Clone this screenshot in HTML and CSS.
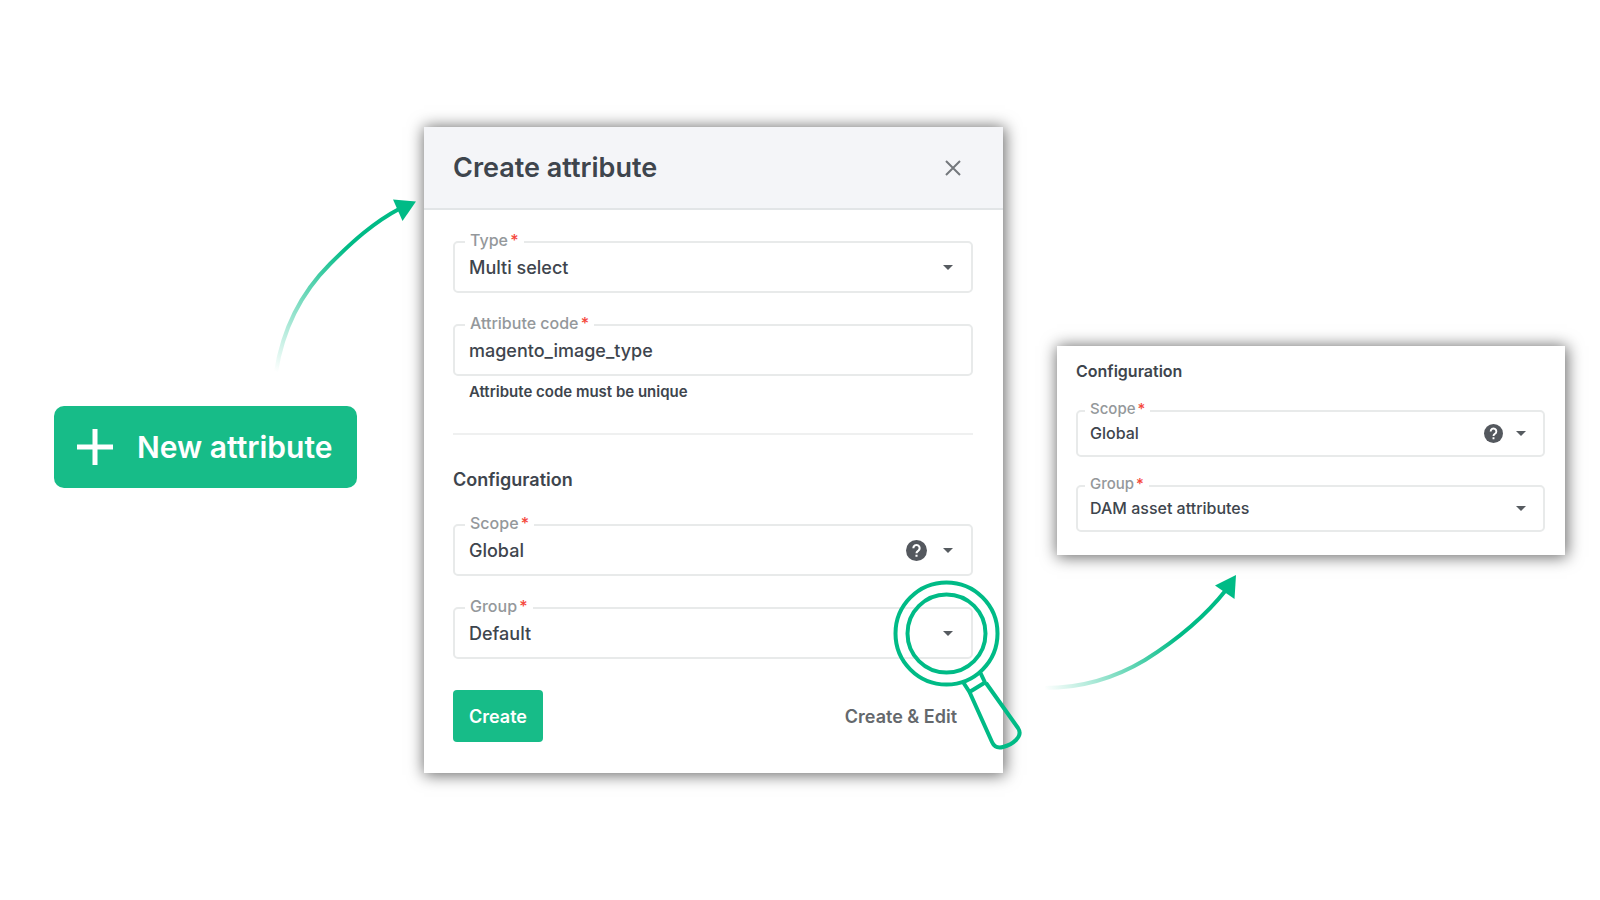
FILE: index.html
```html
<!DOCTYPE html>
<html lang="en">
<head>
<meta charset="utf-8">
<title>Create attribute</title>
<link rel="stylesheet" href="styles.css">
</head>
<body>
<main class="stage">
  <button class="new-button" type="button">
    <svg class="plus" viewBox="0 0 38 38" aria-hidden="true"><path d="M19 1v36M1 19h36"/></svg>
    New attribute
  </button>

  <section class="dialog" role="dialog" aria-labelledby="dialog-title">
    <svg class="arrow arrow-in" viewBox="270 190 150 190" aria-hidden="true">
      <defs>
        <linearGradient id="fade-in" gradientUnits="userSpaceOnUse" x1="276" y1="372" x2="342" y2="245">
          <stop offset="0" stop-color="#00bb86" stop-opacity="0"/>
          <stop offset="1" stop-color="#00bb86"/>
        </linearGradient>
      </defs>
      <path d="M276 372C285 315 312 282 330 264C352 242 374 222 400 208.500" fill="none" stroke="url(#fade-in)" stroke-width="4"/>
      <path d="M393 199.500L416 201.500L402.500 221Z" fill="#00bb86"/>
    </svg>
    <header class="dialog-header">
      <h1 class="dialog-title" id="dialog-title">Create attribute</h1>
      <button class="close" type="button" aria-label="Close">
        <svg viewBox="0 0 16 16" aria-hidden="true"><path d="M1 1l14 14M15 1L1 15"/></svg>
      </button>
    </header>
    <form class="dialog-body">
      <div class="field">
        <label class="label" for="type">Type <span class="required">*</span></label>
        <select class="control" id="type"><option>Multi select</option></select>
        <svg class="caret" viewBox="0 0 10 5" aria-hidden="true"><path d="M0 0h10L5 5z"/></svg>
      </div>
      <div class="field-group">
        <div class="field">
          <label class="label" for="code">Attribute code <span class="required">*</span></label>
          <input class="control" id="code" type="text" value="magento_image_type" spellcheck="false">
        </div>
        <p class="hint">Attribute code must be unique</p>
      </div>
      <hr class="divider">
      <h2 class="section-title">Configuration</h2>
      <div class="field">
        <label class="label" for="scope">Scope <span class="required">*</span></label>
        <select class="control" id="scope"><option>Global</option></select>
        <svg class="help" viewBox="0 0 20 20" aria-hidden="true"><circle cx="10" cy="10" r="10"/><path d="M7 7.800a3 3 0 1 1 4.600 2.500c-1 .7-1.600 1.100-1.600 2.200M10 14v2"/></svg>
        <svg class="caret" viewBox="0 0 10 5" aria-hidden="true"><path d="M0 0h10L5 5z"/></svg>
      </div>
      <div class="field">
        <label class="label" for="group">Group <span class="required">*</span></label>
        <select class="control" id="group"><option>Default</option></select>
        <svg class="caret" viewBox="0 0 10 5" aria-hidden="true"><path d="M0 0h10L5 5z"/></svg>
      </div>
      <div class="actions">
        <button class="create" type="button">Create</button>
        <button class="create-edit" type="button">Create &amp; Edit</button>
      </div>
    </form>
    <svg class="magnifier" viewBox="890 576 136 176" aria-hidden="true">
      <circle cx="946.500" cy="633.500" r="51"/>
      <circle cx="946.500" cy="633.500" r="39"/>
      <path d="M963 682L969.500 692L985 682.500L980.500 673"/>
      <path d="M969.500 692L992 742Q995 749 1003 747Q1011 745 1016 740Q1022 734 1018 728L986 683"/>
    </svg>
  </section>

  <section class="card" aria-labelledby="card-title">
    <h2 class="section-title" id="card-title">Configuration</h2>
    <div class="field">
      <label class="label" for="card-scope">Scope <span class="required">*</span></label>
      <select class="control" id="card-scope"><option>Global</option></select>
      <svg class="help" viewBox="0 0 20 20" aria-hidden="true"><circle cx="10" cy="10" r="10"/><path d="M7 7.800a3 3 0 1 1 4.600 2.500c-1 .7-1.600 1.100-1.600 2.200M10 14v2"/></svg>
      <svg class="caret" viewBox="0 0 10 5" aria-hidden="true"><path d="M0 0h10L5 5z"/></svg>
    </div>
    <div class="field">
      <label class="label" for="card-group">Group <span class="required">*</span></label>
      <select class="control" id="card-group"><option>DAM asset attributes</option></select>
      <svg class="caret" viewBox="0 0 10 5" aria-hidden="true"><path d="M0 0h10L5 5z"/></svg>
    </div>
    <svg class="arrow arrow-out" viewBox="1040 570 200 130" aria-hidden="true">
      <defs>
        <linearGradient id="fade-out" gradientUnits="userSpaceOnUse" x1="1045" y1="690" x2="1175" y2="630">
          <stop offset="0" stop-color="#00bb86" stop-opacity="0"/>
          <stop offset="1" stop-color="#00bb86"/>
        </linearGradient>
      </defs>
      <path d="M1045 688C1080 688 1115 678 1145 660C1180 638 1207 614 1226 590" fill="none" stroke="url(#fade-out)" stroke-width="4"/>
      <path d="M1236 575L1215 585.500L1234.500 599Z" fill="#00bb86"/>
    </svg>
  </section>
</main>
</body>
</html>
```
FILE: styles.css
```css
* {
  box-sizing: border-box;
}

body {
  margin: 0;
  background: #fff;
  color: #3e454d;
  font-family: Inter, "Liberation Sans", sans-serif;
}

button,
input,
select {
  font-family: inherit;
}

.stage {
  display: grid;
  grid-template-columns: 303fr 578fr 508fr;
  column-gap: 61px;
  align-items: center;
  min-height: 100vh;
  padding: 0 35px 0 54px;
}

.new-button {
  display: flex;
  align-items: center;
  gap: 23px;
  height: 82px;
  padding: 0 0 0 22px;
  margin-top: -6px;
  border: 0;
  border-radius: 10px;
  background: #17bc88;
  color: #fff;
  font-size: 30px;
  font-weight: 600;
  white-space: nowrap;
}

.plus {
  flex: none;
  width: 38px;
  height: 38px;
  fill: none;
  stroke: #fff;
  stroke-width: 5;
}

.dialog,
.card {
  position: relative;
  background: #fff;
  box-shadow: 1px 1px 15px 1px rgba(0, 0, 0, 0.6);
}

.dialog {
  margin: 0 -7px 0 6px;
}

.dialog-header {
  display: flex;
  align-items: center;
  justify-content: space-between;
  height: 83px;
  padding: 0 42px 0 29px;
  border-bottom: 2px solid #e2e5e7;
  background: #f4f5f8;
}

.dialog-title {
  margin: 0;
  font-size: 27px;
  font-weight: 600;
  line-height: 32px;
}

.close {
  display: flex;
  padding: 0;
  border: 0;
  background: none;
}

.close svg {
  width: 16px;
  height: 16px;
  fill: none;
  stroke: #74787d;
  stroke-width: 2;
}

.dialog-body {
  display: flex;
  flex-direction: column;
  gap: 31px;
  padding: 31px 30px 31px 29px;
}

.field {
  position: relative;
}

.label {
  position: absolute;
  top: -11px;
  left: 12px;
  padding: 0 5px;
  background: #fff;
  color: #94989b;
  font-size: 16px;
  font-weight: 500;
  line-height: 20px;
}

.required {
  margin-left: -2px;
  color: #f5483c;
}

.control {
  display: block;
  width: 100%;
  height: 52px;
  padding: 0 14px;
  border: 2px solid #e8eaea;
  border-radius: 5px;
  outline: 0;
  appearance: none;
  background: #fff;
  color: #3e454d;
  font-size: 18px;
  font-weight: 500;
}

.caret,
.help {
  position: absolute;
  top: 0;
  bottom: 0;
  margin: auto 0;
  pointer-events: none;
}

.caret {
  right: 20px;
  width: 10px;
  height: 5px;
  fill: #565b60;
}

.help {
  right: 46px;
  width: 21px;
  height: 21px;
  fill: #54585e;
}

.help path {
  fill: none;
  stroke: #fff;
  stroke-width: 2;
}

.hint {
  margin: 6px 0 0 16px;
  font-size: 15px;
  font-weight: 600;
  line-height: 20px;
}

.divider {
  width: 100%;
  height: 2px;
  margin: 0;
  border: 0;
  background: #eff0f0;
}

.section-title {
  margin: 0;
  font-size: 18px;
  font-weight: 600;
  line-height: 27px;
}

.actions {
  display: flex;
  justify-content: space-between;
}

.create,
.create-edit {
  height: 52px;
  padding: 0 16px;
  border: 0;
  border-radius: 4px;
  font-size: 18px;
  font-weight: 600;
}

.create {
  background: #17bc88;
  color: #fff;
}

.create-edit {
  background: none;
  color: #64686c;
}

.card {
  display: flex;
  flex-direction: column;
  gap: 28px;
  padding: 15px 20px 23px 19px;
}

.card .section-title {
  font-size: 16px;
  line-height: 21px;
}

.card .label {
  left: 9px;
  font-size: 15px;
}

.card .control {
  height: 47px;
  padding: 0 12px;
  font-size: 16px;
}

.card .caret {
  right: 19px;
}

.card .help {
  right: 42px;
  width: 19px;
  height: 19px;
}

.arrow,
.magnifier {
  position: absolute;
  pointer-events: none;
}

.arrow-in {
  top: 63px;
  right: calc(100% + 4px);
  width: 150px;
  height: 190px;
}

.arrow-out {
  top: calc(100% + 15px);
  left: -17px;
  width: 200px;
  height: 130px;
}

.magnifier {
  right: -23px;
  bottom: 21px;
  width: 136px;
  height: 176px;
  fill: none;
  stroke: #00bb86;
  stroke-width: 4;
  stroke-linejoin: round;
}
```
